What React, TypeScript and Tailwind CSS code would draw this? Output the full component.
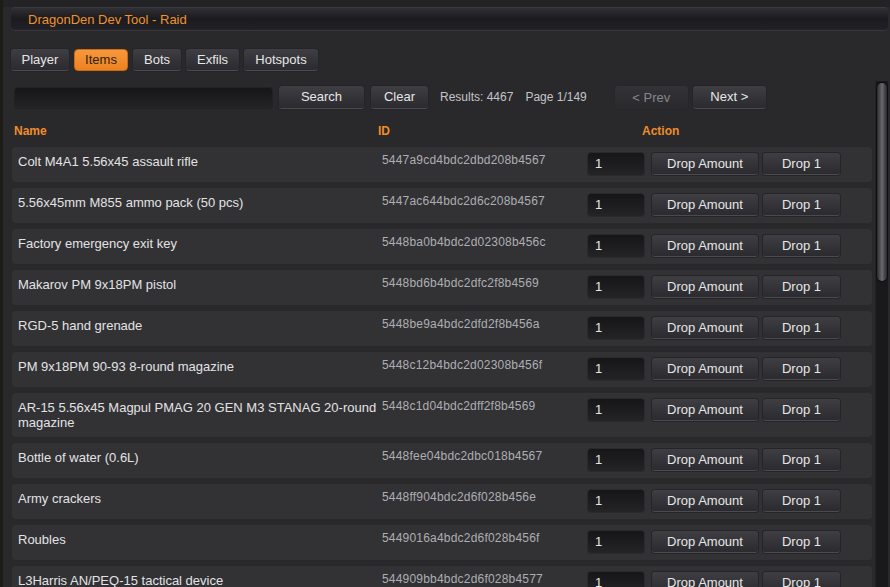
import React from "react";

const items: { name: string; id: string }[] = [
  { name: "Colt M4A1 5.56x45 assault rifle", id: "5447a9cd4bdc2dbd208b4567" },
  { name: "5.56x45mm M855 ammo pack (50 pcs)", id: "5447ac644bdc2d6c208b4567" },
  { name: "Factory emergency exit key", id: "5448ba0b4bdc2d02308b456c" },
  { name: "Makarov PM 9x18PM pistol", id: "5448bd6b4bdc2dfc2f8b4569" },
  { name: "RGD-5 hand grenade", id: "5448be9a4bdc2dfd2f8b456a" },
  { name: "PM 9x18PM 90-93 8-round magazine", id: "5448c12b4bdc2d02308b456f" },
  { name: "AR-15 5.56x45 Magpul PMAG 20 GEN M3 STANAG 20-round magazine", id: "5448c1d04bdc2dff2f8b4569" },
  { name: "Bottle of water (0.6L)", id: "5448fee04bdc2dbc018b4567" },
  { name: "Army crackers", id: "5448ff904bdc2d6f028b456e" },
  { name: "Roubles", id: "5449016a4bdc2d6f028b456f" },
  { name: "L3Harris AN/PEQ-15 tactical device", id: "544909bb4bdc2d6f028b4577" },
];

const tabs = [
  { label: "Player", w: "w-[58px]" },
  { label: "Items", w: "w-[54px]", active: true },
  { label: "Bots", w: "w-[48px]" },
  { label: "Exfils", w: "w-[53px]" },
  { label: "Hotspots", w: "w-[74px]" },
];

const btn =
  "flex items-center justify-center rounded-[3px] bg-gradient-to-b from-[#3e3e43] to-[#2b2b2f] border-b border-[#4a4a50] shadow-[0_0_0_1px_#252528] text-[13px] text-[#e6e6e6]";

function Field({ className }: { className: string }) {
  return (
    <div
      className={`rounded-[3px] bg-gradient-to-b from-[#161618] to-[#242427] shadow-[0_0_0_1px_#222225] ${className}`}
    />
  );
}

export default function App() {
  return (
    <div
      className="w-[890px] h-[587px] overflow-hidden flex flex-col bg-[#29292c] border-l-[3px] border-[#1d1c17]"
      style={{ fontFamily: '"Liberation Sans", Arial, sans-serif' }}
    >
      <div className="h-[7px] bg-[#232326] shrink-0" />
      <div className="ml-[8px] mr-[2px] h-[24px] shrink-0 flex items-center pl-[17px] pt-[1px] rounded-[4px] bg-gradient-to-b from-[#2f2f34] via-[#1b1b1f] to-[#222226] border-t border-[#3a3a3f] border-b border-b-[#38383c]">
        <span className="text-[13px] text-[#f0922e]">DragonDen Dev Tool - Raid</span>
      </div>

      <div className="flex gap-[5px] ml-[8px] mt-[18px] shrink-0">
        {tabs.map((t) =>
          t.active ? (
            <div
              key={t.label}
              className={`${t.w} h-[22px] flex items-center justify-center rounded-[4px] bg-gradient-to-b from-[#f7983a] to-[#ee8220] border border-[#c86a16] text-[13px] text-[#2a1e12]`}
            >
              {t.label}
            </div>
          ) : (
            <div key={t.label} className={`${t.w} h-[22px] ${btn}`}>
              {t.label}
            </div>
          )
        )}
      </div>

      <div className="flex flex-1 min-h-0 mt-[10px] ml-[8px] mr-[2px]">
        <div className="flex-1 flex flex-col min-w-0">
          <div className="flex items-center h-[24px] mt-[5px] pl-[4px]">
            <Field className="w-[257px] h-[20px]" />
            <div className={`${btn} w-[85px] h-[23px] ml-[7px]`}>Search</div>
            <div className={`${btn} w-[57px] h-[23px] ml-[7px]`}>Clear</div>
            <span className="ml-[12px] text-[12px] text-[#c4c4c8] -mt-[2px]">Results: 4467</span>
            <span className="ml-[12px] text-[12px] text-[#c4c4c8] -mt-[2px]">Page 1/149</span>
            <div className="ml-[28px] w-[73px] h-[23px] flex items-center justify-center rounded-[3px] bg-gradient-to-b from-[#333337] to-[#2a2a2d] shadow-[0_0_0_1px_#27272a] text-[13px] text-[#86868b]">
              &lt; Prev
            </div>
            <div className={`${btn} w-[73px] h-[23px] ml-[5px]`}>Next &gt;</div>
          </div>

          <div className="flex mt-[13px] h-[18px] items-center pl-[3px] text-[12px] font-bold text-[#f08c2a]">
            <span className="w-[364px]">Name</span>
            <span className="w-[264px]">ID</span>
            <span>Action</span>
          </div>

          <div className="flex flex-col gap-[6px] mt-[7px] ml-[1px] mr-[3px]">
            {items.map((it) => (
              <div key={it.id} className="flex items-start min-h-[35px] rounded-[4px] bg-[#323235] pl-[6px]">
                <div className="w-[364px] pt-[7px] pb-[7px] pr-[2px] text-[13px] leading-[15px] text-[#e2e2e4]">
                  {it.name}
                </div>
                <div className="w-[206px] pt-[6px] text-[12px] leading-[15px] tracking-[0.2px] text-[#aeaeb2]">
                  {it.id}
                </div>
                <div className="mt-[6px] w-[56px] h-[22px] flex items-center pl-[7px] rounded-[3px] bg-gradient-to-b from-[#161618] to-[#242427] shadow-[0_0_0_1px_#2a2a2d] text-[13px] text-[#e6e6e6]">
                  1
                </div>
                <div className={`${btn} mt-[6px] ml-[8px] w-[106px] h-[22px]`}>Drop Amount</div>
                <div className={`${btn} mt-[6px] ml-[5px] w-[77px] h-[22px]`}>Drop 1</div>
              </div>
            ))}
          </div>
        </div>

        <div className="w-[13px] shrink-0 bg-[#19191b] border-l border-[#222224] pt-[2px] flex justify-center">
          <div className="w-[10px] h-[198px] rounded-full bg-gradient-to-r from-[#2a2a2c] via-[#6a6a6f] to-[#2a2a2c] shadow-[0_0_0_1px_#0e0e0f]" />
        </div>
      </div>
    </div>
  );
}
